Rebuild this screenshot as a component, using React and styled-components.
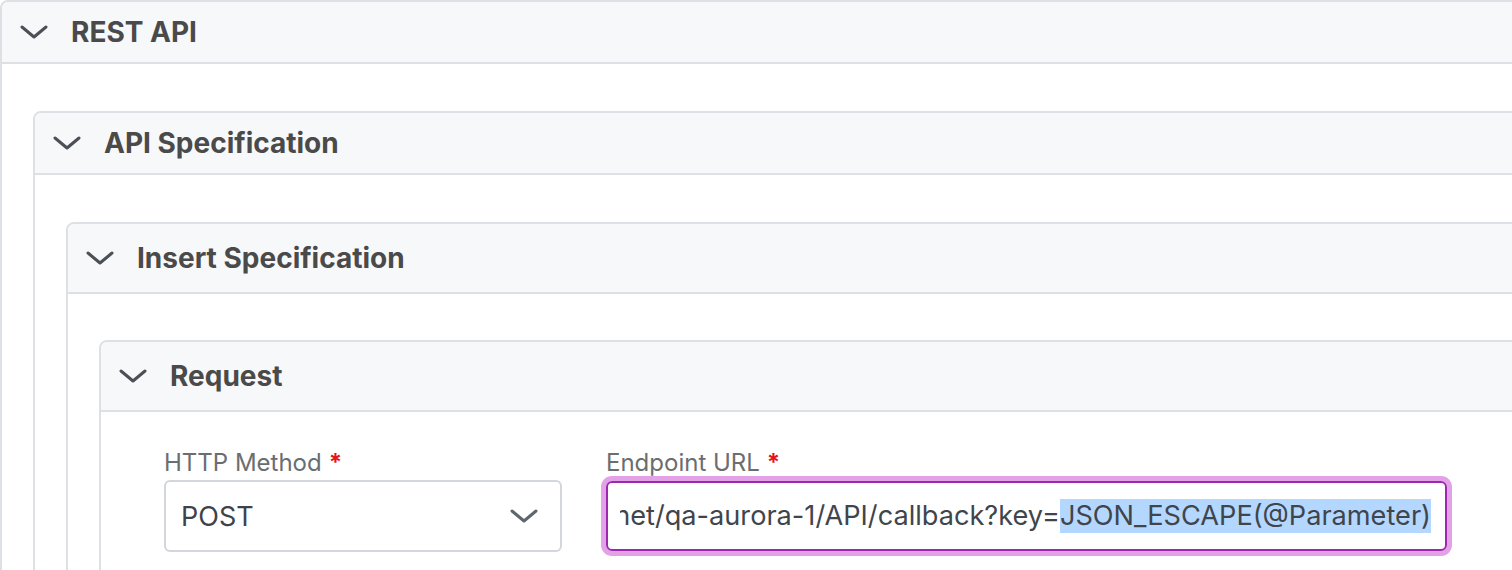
import React from 'react';
import styled, { createGlobalStyle } from 'styled-components';

const GlobalStyle = createGlobalStyle`
  html, body {
    margin: 0;
    padding: 0;
    background: #ffffff;
    overflow: hidden;
  }
  body {
    font-family: Inter, "Noto Sans", "Liberation Sans", sans-serif;
  }
`;

const Page = styled.div`
  width: 1600px;
  height: 570px;
  overflow: hidden;
`;

const StyledPanel = styled.section`
  border: 2px solid #dde0e4;
  border-radius: 8px;
  background: #ffffff;
  overflow: hidden;
`;

const PanelHeader = styled.div`
  display: flex;
  align-items: center;
  gap: 23px;
  height: ${(p) => p.$height}px;
  padding-left: 18px;
  background: #f7f8fa;
  border-bottom: 2px solid #dde0e4;
`;

const PanelTitle = styled.h2`
  margin: 0;
  font-size: 28px;
  font-weight: 700;
  color: #4a4a4a;
`;

const PanelBody = styled.div`
  padding: ${(p) => p.$pad};
`;

const Chevron = ({ size = 28, color = '#4a5056', stroke = 3 }) => (
  <svg width={size} height={size / 2} viewBox="0 0 28 14" fill="none">
    <path
      d="M2 2 L14 12 L26 2"
      stroke={color}
      strokeWidth={stroke}
      strokeLinecap="round"
      strokeLinejoin="round"
    />
  </svg>
);

const Panel = ({ title, headerHeight, pad, children }) => (
  <StyledPanel>
    <PanelHeader $height={headerHeight}>
      <Chevron />
      <PanelTitle>{title}</PanelTitle>
    </PanelHeader>
    <PanelBody $pad={pad}>{children}</PanelBody>
  </StyledPanel>
);

const FieldRow = styled.div`
  display: grid;
  grid-template-columns: 398px 841px;
  column-gap: 44px;
`;

const Field = styled.div`
  display: flex;
  flex-direction: column;
  gap: 3px;
`;

const Label = styled.label`
  font-size: 24px;
  line-height: 29px;
  color: #6b6d70;
`;

const Required = styled.span`
  color: #e8141b;
  font-weight: 700;
  margin-left: 7px;
`;

const SelectBox = styled.div`
  display: flex;
  align-items: center;
  justify-content: space-between;
  box-sizing: border-box;
  height: 72px;
  padding: 0 22px 0 15px;
  border: 2px solid #d3d6da;
  border-radius: 6px;
  font-size: 27px;
  color: #3e434a;
`;

const UrlBox = styled.div`
  display: flex;
  align-items: center;
  box-sizing: border-box;
  height: 70px;
  margin-top: 1px;
  padding: 0 14px 0 12px;
  border: 2px solid #9c27b0;
  border-radius: 6px;
  box-shadow: 0 0 0 5px #e3a1e8;
  font-size: 27.15px;
  color: #40454c;
`;

const UrlTrack = styled.div`
  flex: 1;
  display: flex;
  justify-content: flex-end;
  overflow: hidden;
  white-space: nowrap;
`;

const Selected = styled.span`
  background: #b4d7ff;
  line-height: 34px;
`;

export default function App() {
  return (
    <Page>
      <GlobalStyle />
      <Panel title="REST API" headerHeight={60} pad="47px 0 0 31px">
        <Panel title="API Specification" headerHeight={60} pad="47px 0 0 31px">
          <Panel title="Insert Specification" headerHeight={68} pad="46px 0 0 31px">
            <Panel title="Request" headerHeight={68} pad="36px 0 40px 63px">
              <FieldRow>
                <Field>
                  <Label>
                    HTTP Method<Required>*</Required>
                  </Label>
                  <SelectBox>
                    <span>POST</span>
                    <Chevron color="#5f666d" />
                  </SelectBox>
                </Field>
                <Field>
                  <Label>
                    Endpoint URL<Required>*</Required>
                  </Label>
                  <UrlBox>
                    <UrlTrack>
                      <span>https://callbacks.example.net/qa-aurora-1/API/callback?key=</span>
                      <Selected>JSON_ESCAPE(@Parameter)</Selected>
                    </UrlTrack>
                  </UrlBox>
                </Field>
              </FieldRow>
            </Panel>
          </Panel>
        </Panel>
      </Panel>
    </Page>
  );
}
